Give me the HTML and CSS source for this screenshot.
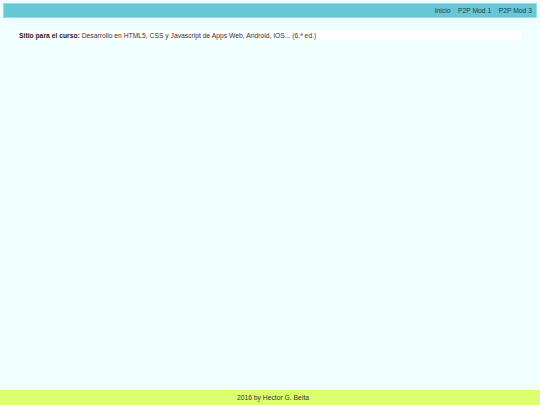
FILE: index.html
```html
<!DOCTYPE html>
<html lang="es">
<head>
<meta charset="utf-8">
<title>Sitio del curso</title>
<link rel="stylesheet" href="styles.css">
</head>
<body>
<header class="topbar">
  <nav class="menu">
    <a href="#">Inicio</a>
    <a href="#">P2P Mod 1</a>
    <a href="#">P2P Mod 3</a>
  </nav>
</header>
<main class="content">
  <p class="course"><strong>Sitio para el curso:</strong> Desarrollo en HTML5, CSS y Javascript de Apps Web, Android, IOS... (6.ª ed.)</p>
</main>
<footer class="footer">2016 by Hector G. Beita</footer>
</body>
</html>
```
FILE: styles.css
```css
html, body {
  margin: 0;
  padding: 0;
  height: 100%;
}
body {
  background: #f0feff;
  font-family: "Liberation Sans", Arial, sans-serif;
  font-size: 6.75px;
  color: #333;
  display: flex;
  flex-direction: column;
}
.topbar {
  margin: 3px 3px 0 3px;
  height: 13px;
  background: #68c7d7;
  border: 1px solid #9adbe6;
  display: flex;
  justify-content: flex-end;
  align-items: center;
}
.menu {
  display: flex;
  gap: 7.5px;
  padding-right: 4px;
}
.menu a {
  color: #2a3a3e;
  text-decoration: none;
}
.content {
  flex: 1;
  padding: 13px 19px 0 18px;
}
.course {
  margin: 0;
  background: #ffffff;
  height: 9px;
  line-height: 9px;
  padding-left: 1px;
  color: #333;
}
.course strong {
  color: #1a1a1a;
}
.footer {
  height: 15px;
  background: #dcff70;
  display: flex;
  align-items: center;
  justify-content: center;
  padding-left: 6px;
  color: #333;
}
```
